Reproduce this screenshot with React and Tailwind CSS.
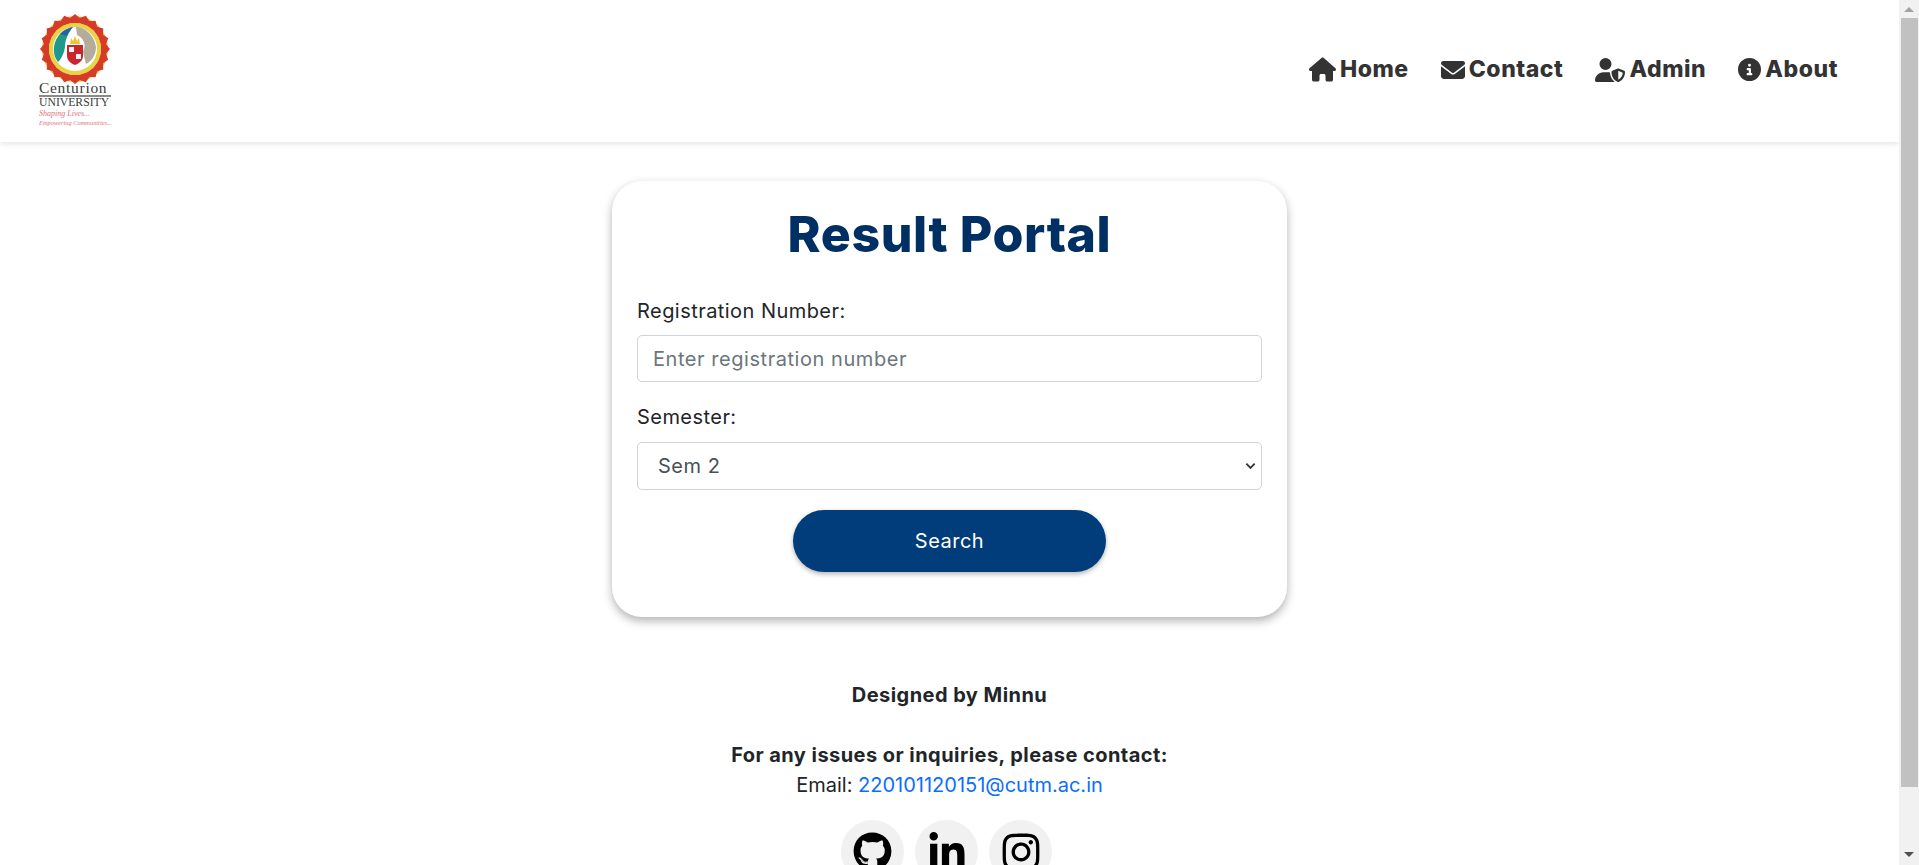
import { FaHouse, FaEnvelope, FaUserShield, FaCircleInfo, FaGithub, FaLinkedinIn, FaInstagram } from "react-icons/fa6";

function Logo() {
    const rays = Array.from({ length: 20 }, (_, i) => (i * 360) / 20);
    return (
        <div className="flex flex-col w-[72px] mb-[3px] font-['Liberation_Serif',serif]">
            <svg viewBox="0 0 70 70" className="w-[70px] h-[70px] ml-[1px]">
                <circle cx="35" cy="35" r="33" fill="#e9b92a" />
                {rays.map((r) => (
                    <path key={r} d="M35 0 L41 5 L39 9 L31 9 L29 5 Z" fill="#d63a2a" transform={`rotate(${r} 35 35)`} />
                ))}
                <circle cx="35" cy="35" r="26" fill="#e8d24a" />
                <circle cx="35" cy="35" r="22" fill="#fff" />
                <path d="M14 38 C13 26 21 15 33 13 C28 19 25 26 25 33 C24 40 21 45 18 48 C16 45 14 42 14 38 Z" fill="#1f9a8a" />
                <path d="M20 20 C24 16 29 14 33 13 C30 16 28 19 27 22 Z" fill="#2b5fa8" />
                <path d="M36 13 C46 13 55 23 56 33 C56 41 52 47 46 50 L43 38 C47 30 43 24 37 21 Z" fill="#b5ad9c" />
                <path d="M31 24 L33 27 L35 22 L37 27 L39 24 L40 30 L30 30 Z" fill="#f4c430" />
                <path d="M27 31 H43 V42 C43 47 38 50 35 51 C32 50 27 47 27 42 Z" fill="#c8262c" />
                <path d="M29 33 H34 V38 H29 Z M36 40 H41 V45 H36 Z" fill="#f3f3f3" />
            </svg>
            <span className="text-[15.5px] leading-[15px] -mt-[4px] tracking-[0.7px] text-[#3c3c3c] border-b-2 border-[#8a8a8a] whitespace-nowrap">Centurion</span>
            <span className="text-[11.7px] leading-[11px] text-[#3c3c3c] whitespace-nowrap">UNIVERSITY</span>
            <span className="text-[8px] leading-[9px] mt-[1px] italic text-[#e0707a] whitespace-nowrap">Shaping Lives...</span>
            <span className="text-[6.4px] leading-[7px] mt-[1px] italic text-[#e0707a] whitespace-nowrap">Empowering Communities...</span>
        </div>
    );
}

function NavItem({ icon, label }) {
    return (
        <a className="flex items-center gap-[4px] text-[#333] text-[23px] tracking-[0.55px] font-extrabold leading-none">
            {icon}
            <span>{label}</span>
        </a>
    );
}

function SocialIcon({ children }) {
    return (
        <a className="w-[63px] h-[63px] rounded-full bg-[#f1f1f1] flex items-center justify-center text-black">
            {children}
        </a>
    );
}

function Scrollbar() {
    return (
        <div className="w-[20px] h-full bg-[#f1f1f1] flex flex-col items-center shrink-0">
            <div className="h-[18px] flex items-center justify-center">
                <svg viewBox="0 0 10 5" className="w-[10px] h-[5px]"><path d="M5 0 L10 5 H0 Z" fill="#a3a3a3" /></svg>
            </div>
            <div className="w-[17px] h-[769px] bg-[#c1c1c1]"></div>
            <div className="flex-1 flex items-end pb-[8px]">
                <svg viewBox="0 0 10 5" className="w-[10px] h-[5px]"><path d="M0 0 H10 L5 5 Z" fill="#505050" /></svg>
            </div>
        </div>
    );
}

export default function App() {
    return (
        <div className="h-screen flex overflow-hidden bg-white text-[#212529] font-['Inter',sans-serif]">
            <div className="flex-1 h-full overflow-hidden">
                <header className="h-[142px] flex items-center justify-between pl-[39px] pr-[61px] bg-white shadow-[0_2px_5px_rgba(0,0,0,0.1)]">
                    <Logo />
                    <nav className="flex items-center gap-[32px] mb-[3px]">
                        <NavItem icon={<FaHouse className="text-[27px] w-[27px]" />} label="Home" />
                        <NavItem icon={<FaEnvelope className="text-[24px]" />} label="Contact" />
                        <NavItem icon={<FaUserShield className="text-[24px] w-[30px]" />} label="Admin" />
                        <NavItem icon={<FaCircleInfo className="text-[23px]" />} label="About" />
                    </nav>
                </header>

                <main className="w-[675px] mx-auto mt-[39px] h-[436px] bg-white rounded-[30px] px-[25px] pt-[23px] shadow-[0_4px_10px_rgba(0,0,0,0.3)]">
                    <h1 className="text-center text-[50px] tracking-[0.6px] leading-[60px] font-extrabold text-[#002f63]">Result Portal</h1>
                    <label className="block text-[20px] tracking-[0.45px] leading-[28px] mt-[33px]">Registration Number:</label>
                    <input
                        placeholder="Enter registration number"
                        className="block w-full h-[47px] mt-[10px] px-[15px] text-[20px] tracking-[0.55px] rounded-[5px] border border-[#ced4da] placeholder:text-[#6c757d] outline-none"
                    />
                    <label className="block text-[20px] tracking-[0.45px] leading-[28px] mt-[21px]">Semester:</label>
                    <div className="relative mt-[11px]">
                        <select className="block w-full h-[48px] pl-[20px] text-[20px] tracking-[0.5px] text-[#495057] rounded-[5px] border border-[#ced4da] bg-white appearance-none outline-none">
                            <option>Sem 2</option>
                        </select>
                        <svg viewBox="0 0 12 8" className="absolute right-[6px] top-[20px] w-[11px] h-[8px]">
                            <path d="M1.5 1.5 L6 6 L10.5 1.5" fill="none" stroke="#333" strokeWidth="2" />
                        </svg>
                    </div>
                    <div className="flex justify-center mt-[20px]">
                        <button className="w-[313px] h-[62px] rounded-[31px] bg-[#003d7a] text-white text-[20px] tracking-[0.5px] font-normal shadow-[0_2px_5px_rgba(0,0,0,0.3)]">
                            Search
                        </button>
                    </div>
                </main>

                <footer className="flex flex-col items-center mt-[64px] text-[20px] leading-[28px]">
                    <p className="font-bold tracking-[0.45px]">Designed by Minnu</p>
                    <p className="font-bold tracking-[0.45px] mt-[32px]">For any issues or inquiries, please contact:</p>
                    <p className="mt-[2px]">Email: <a className="text-[#0d6efd]">220101120151@cutm.ac.in</a></p>
                    <div className="flex gap-[11px] mt-[21px] mr-[6px]">
                        <SocialIcon><FaGithub className="text-[39px]" /></SocialIcon>
                        <SocialIcon><FaLinkedinIn className="text-[40px]" /></SocialIcon>
                        <SocialIcon><FaInstagram className="text-[42px]" /></SocialIcon>
                    </div>
                </footer>
            </div>
            <Scrollbar />
        </div>
    );
}
